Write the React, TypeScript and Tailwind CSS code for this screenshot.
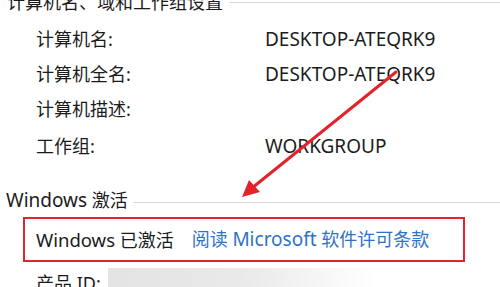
import React from "react";

const font = { fontFamily: '"Noto Sans", "Noto Sans CJK SC", sans-serif' };

function Row({ label, value }: { label: string; value?: string }) {
  return (
    <div className="flex h-[35px] items-center">
      <div className="w-[265px] pl-[36px]">{label}</div>
      <div className="text-[19px]">{value}</div>
    </div>
  );
}

export default function App() {
  return (
    <div
      className="relative h-[287px] w-[500px] overflow-hidden bg-white text-[18px] text-[#1b1b1b]"
      style={font}
    >
      <div className="mt-[-14px] flex h-[32px] items-center pl-[7px]">
        <span className="whitespace-nowrap">计算机名、域和工作组设置</span>
        <div className="ml-[6px] h-px flex-1 bg-[#d9d9d9]" />
      </div>
      <div className="mt-[4px]">
        <Row label="计算机名:" value="DESKTOP-ATEQRK9" />
        <Row label="计算机全名:" value="DESKTOP-ATEQRK9" />
        <Row label="计算机描述:" />
        <div className="mt-[2px]">
          <Row label="工作组:" value="WORKGROUP" />
        </div>
      </div>
      <div className="mt-[21px] flex h-[30px] items-center pl-[6px]">
        <span className="whitespace-nowrap">
          <span className="text-[19px]">Windows</span> 激活
        </span>
        <div className="ml-[5px] mt-[5px] h-px flex-1 bg-[#d9d9d9]" />
      </div>
      <div className="ml-[23px] mt-[2px] flex h-[45px] w-[442px] items-center border-2 border-[#e0232e] pl-[11px]">
        <span>
          <span className="text-[18.5px]">Windows</span> 已激活
        </span>
        <span className="ml-[18px] text-[#2f72c4]">
          阅读 <span className="text-[19px]">Microsoft</span> 软件许可条款
        </span>
      </div>
      <div className="mt-[6px] flex h-[30px] items-center pl-[36px]">
        <span className="w-[72px] whitespace-nowrap">产品 ID:</span>
        <div className="h-[30px] w-[267px] bg-gradient-to-r from-[#e4e4e4] via-[#e9e9e9] to-[#ffffff]" />
      </div>
      <svg
        className="pointer-events-none absolute left-0 top-0"
        width="500"
        height="287"
        viewBox="0 0 500 287"
      >
        <line x1="396" y1="72" x2="252" y2="188" stroke="#e3222b" strokeWidth="3" strokeLinecap="round" />
        <polygon points="242,197 249,180 260,192" fill="#e3222b" />
      </svg>
    </div>
  );
}
